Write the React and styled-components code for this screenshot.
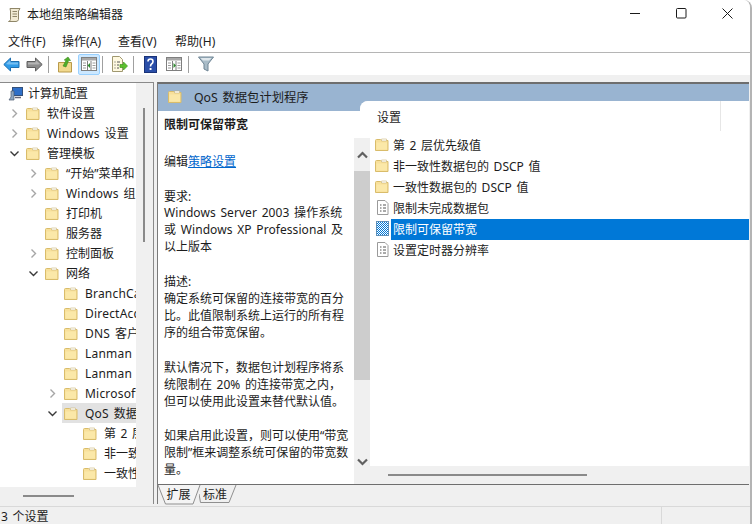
import React from "react";
import styled, { createGlobalStyle } from "styled-components";

const GlobalStyle = createGlobalStyle`
  html, body {
    margin: 0;
    padding: 0;
    background: #fff;
    overflow: hidden;
  }
  body {
    font-family: "Noto Sans", "Noto Sans CJK SC", sans-serif;
    font-size: 12px;
    word-spacing: 1.5px;
    color: #1c1c1c;
  }
`;

const Page = styled.div`
  width: 753px;
  height: 524px;
  overflow: hidden;
`;

const Window = styled.div`
  width: 750px;
  height: 524px;
  display: flex;
  flex-direction: column;
  background: #f0f0f0;
  border-right: 2px solid #b4b4b4;
  border-top-right-radius: 8px;
  overflow: hidden;
`;

const TitleBar = styled.div`
  height: 30px;
  flex: none;
  display: flex;
  align-items: center;
  padding: 0 0 0 7px;
  background: #fff;
`;

const TitleText = styled.span`
  margin-left: 6px;
  font-size: 12px;
  flex: 1;
  position: relative;
  top: -1px;
`;

const WindowButtons = styled.div`
  display: flex;
  align-items: center;
  margin-top: -4px;
`;

const WindowButton = styled.div`
  width: 46px;
  height: 26px;
  display: flex;
  align-items: center;
  justify-content: center;
`;

const MenuBar = styled.div`
  height: 22px;
  flex: none;
  display: flex;
  align-items: center;
  padding-left: 8px;
  gap: 17px;
  background: #fff;
  border-bottom: 1px solid #b5b5b5;
`;

const MenuItem = styled.span`
  font-size: 12px;
  width: ${(p) => p.$w}px;
  white-space: nowrap;
  letter-spacing: 0.05px;
`;

const ToolBar = styled.div`
  height: 22px;
  flex: none;
  display: flex;
  align-items: center;
  padding-left: 3px;
  background: #fff;
`;

const ToolButton = styled.div`
  width: ${(p) => p.$w || 16}px;
  height: 21px;
  margin-left: ${(p) => p.$ml || 0}px;
  display: flex;
  align-items: center;
  justify-content: center;
  border-radius: 2px;
  box-sizing: border-box;
  background: ${(p) => (p.$active ? "#cce8ff" : "transparent")};
  border: ${(p) => (p.$active ? "1px solid #99d1ff" : "none")};
`;

const ToolSep = styled.div`
  width: 1px;
  height: 17px;
  margin-left: ${(p) => p.$ml}px;
  background: #a0a0a0;
`;

const Main = styled.div`
  height: 423px;
  flex: none;
  margin-top: 7px;
  display: flex;
`;

const TreePane = styled.div`
  width: 153px;
  flex: none;
  height: 421px;
  box-sizing: content-box;
  display: flex;
  flex-direction: column;
  border-top: 1px solid #8a8a8a;
  border-right: 1px solid #8a8a8a;
`;

const TreeTop = styled.div`
  flex: 1;
  display: flex;
  min-height: 0;
`;

const TreeList = styled.div`
  width: 136px;
  flex: none;
  background: #fff;
  overflow: hidden;
  height: 404px;
`;

const VTrack = styled.div`
  flex: 1;
  display: flex;
  justify-content: center;
  padding: 25px 2px 0 0;
`;

const VThumb = styled.div`
  width: 2px;
  height: 134px;
  background: #8a8a8a;
`;

const HTrack = styled.div`
  height: 17px;
  flex: none;
  padding-left: 23px;
  display: flex;
  align-items: center;
`;

const HThumb = styled.div`
  width: ${(p) => p.$w}px;
  height: 2px;
  background: #8a8a8a;
`;

const TreeRow = styled.div`
  height: 20px;
  display: flex;
  align-items: center;
  white-space: nowrap;
  padding-left: ${(p) => p.$indent}px;
`;

const Twist = styled.div`
  width: 19px;
  height: 20px;
  flex: none;
  display: flex;
  align-items: center;
  justify-content: center;
  position: relative;
  left: -2px;
`;

const TreeLabel = styled.div`
  display: flex;
  align-items: center;
  flex: 1;
  height: 20px;
  margin-left: -2px;
  padding-left: 2px;
  background: ${(p) => (p.$selected ? "#e2e2e2" : "transparent")};
`;

const TreeText = styled.span`
  margin-left: ${(p) => p.$ml ?? 7}px;
  letter-spacing: ${(p) => (p.$wide ? "0.2px" : "0")};
`;

const Details = styled.div`
  margin-left: 3px;
  width: 591px;
  height: 421px;
  flex: none;
  display: flex;
  flex-direction: column;
  border-top: 1px solid #6e6e6e;
  border-left: 1px solid #7a7a7a;
`;

const Panes = styled.div`
  height: 400px;
  flex: none;
  display: flex;
  background: #99b4d1;
  border-top: 1px solid #6e6e6e;
  border-bottom: 1px solid #6e6e6e;
`;

const DescColumn = styled.div`
  width: 202px;
  flex: none;
  display: flex;
  flex-direction: column;
  position: relative;
`;

const DescHeader = styled.div`
  height: 25px;
  padding: 0 0 2px 10px;
  flex: none;
  display: flex;
  align-items: center;
  gap: 12px;
  font-size: 12.3px;
`;

const DescBody = styled.div`
  flex: 1;
  background: #fff;
  padding: 5px 0 0 6px;
  line-height: 17px;
  white-space: nowrap;
  overflow: hidden;
`;

const DescTitle = styled.div`
  font-weight: 700;
  margin-bottom: 20px;
`;

const DescLine = styled.div`
  height: ${(p) => p.$h || 17}px;
  letter-spacing: ${(p) => (p.$wide ? "0.07px" : "0")};
`;

const Gap = styled.div`
  height: ${(p) => p.$h}px;
`;

const DescLink = styled.span`
  color: #0066cc;
  text-decoration: underline;
`;

/* sits on top of both the description and the list */
const DescScroll = styled.div`
  position: absolute;
  top: 54px;
  left: 196px;
  width: 16px;
  bottom: 0;
  background: #f0f0f0;
  display: flex;
  flex-direction: column;
  align-items: center;
`;

const ArrowBox = styled.div`
  height: 33px;
  flex: none;
  width: 100%;
  display: flex;
  align-items: center;
  justify-content: center;
`;

const DescThumb = styled.div`
  width: 100%;
  height: 209px;
  flex: none;
  background: #cdcdcd;
`;

const ListColumn = styled.div`
  flex: 1;
  display: flex;
  flex-direction: column;
  margin-top: 17px;
  background: #f0f0f0;
  border-top-left-radius: 8px;
  overflow: hidden;
`;

const ListBody = styled.div`
  height: 365px;
  flex: none;
  background: #fff;
  padding-left: 15px;
`;

const ColumnHead = styled.div`
  height: 34px;
  display: flex;
  align-items: center;
  position: relative;
`;

const ColumnName = styled.span`
  margin: -3px 0 0 2px;
`;

const ColumnEdge = styled.div`
  position: absolute;
  right: 28px;
  top: 0;
  bottom: 4px;
  width: 1px;
  background: #e6e6e6;
`;

const ListRow = styled.div`
  height: 21px;
  display: flex;
  align-items: center;
  white-space: nowrap;
`;

const ListIcon = styled.div`
  display: flex;
  margin-bottom: 2px;
`;

const ListLabel = styled.div`
  flex: 1;
  height: 21px;
  box-sizing: border-box;
  display: flex;
  align-items: center;
  margin-left: 2px;
  padding: 0 0 2px 2px;
  color: ${(p) => (p.$selected ? "#fff" : "inherit")};
  background: ${(p) => (p.$selected ? "#0078d7" : "transparent")};
`;

const ListScroll = styled.div`
  flex: 1;
  display: flex;
  align-items: center;
  padding: 0 0 1px 28px;
  background: #f0f0f0;
`;

const Tabs = styled.div`
  height: 21px;
  flex: none;
  display: flex;
  background: #f0f0f0;
`;

const Tab = styled.div`
  width: ${(p) => p.$w}px;
  height: 20px;
  font-size: 12px;
  line-height: 20px;
  text-align: center;
  position: relative;
`;

const TabEdges = styled.svg`
  position: absolute;
  left: 0;
  top: 0;
`;

const TabText = styled.span`
  position: relative;
`;

const StatusBar = styled.div`
  flex: 1;
  display: flex;
  align-items: center;
  border-top: 1px solid #d9d9d9;
  margin-top: 1px;
  background: #f0f0f0;
`;

const StatusCell = styled.div`
  width: 662px;
  height: 100%;
  display: flex;
  align-items: center;
  padding-left: 1px;
  box-sizing: border-box;
  border-right: 1px solid #d9d9d9;
`;

const Folder = () => (
  <svg width="14" height="13" viewBox="0 0 14 13" style={{ flex: "none" }}>
    <path d="M.5 2.5 Q.5 1.5 1.5 1.5H5.5L6.5 2.5H13V12.5H.5Z" fill="#f8e09a" stroke="#d9bc6a" />
    <path d="M1.5 11.5V4.5H12V11.5Z" fill="#fbe8a8" />
    <path d="M6.5 1H11.5V3H6.5Z" fill="#fff" stroke="#cbb77a" strokeWidth=".6" />
  </svg>
);

const PolicyIcon = ({ selected }) =>
  selected ? (
    <svg width="14" height="15" viewBox="0 0 14 15" style={{ flex: "none" }}>
      <defs>
        <pattern id="dither" width="2" height="2" patternUnits="userSpaceOnUse">
          <rect width="2" height="2" fill="#fff" />
          <rect width="1" height="1" fill="#0078d7" />
          <rect x="1" y="1" width="1" height="1" fill="#0078d7" />
        </pattern>
      </defs>
      <rect x="1.5" y=".5" width="12" height="14" fill="url(#dither)" stroke="#5f8fb8" />
    </svg>
  ) : (
    <svg width="14" height="15" viewBox="0 0 14 15" style={{ flex: "none" }}>
      <path d="M2.5.5H10L13 3.5V14.5H2.5Z" fill="#fff" stroke="#9a9a9a" />
      <path d="M5 5h1.5M8 5h3M5 8h1.5M8 8h3M5 11h1.5M8 11h3" stroke="#555" />
    </svg>
  );

const Chevron = ({ open }) => (
  <svg width="9" height="9" viewBox="0 0 9 9">
    <path
      d={open ? "M.5 2.5L4.5 6.5L8.5 2.5" : "M2.5.5L6.5 4.5L2.5 8.5"}
      fill="none"
      stroke={open ? "#3a3a3a" : "#a6a6a6"}
      strokeWidth="1.4"
    />
  </svg>
);

const ScrollArrow = ({ up }) => (
  <svg width="11" height="8" viewBox="0 0 11 8">
    <path d={up ? "M1 6.5L5.5 2L10 6.5" : "M1 1.5L5.5 6L10 1.5"} fill="none" stroke="#606060" strokeWidth="2.2" />
  </svg>
);

const ScrollIcon = () => (
  <svg width="14" height="16" viewBox="0 0 14 16">
    <path d="M3 1.5H13L11.5 4V12.5Q11 14.5 9 14.5H1.5Q3.5 14 3.5 12.5V4Z" fill="#f1ead2" stroke="#8f8668" />
    <path d="M5.5 4.5H10M5.5 7H10M5.5 9.5H10" stroke="#8f8668" />
  </svg>
);

const ArrowIcon = ({ color, edge, flip }) => (
  <svg width="17" height="15" viewBox="0 0 17 15" style={{ transform: flip ? "scaleX(-1)" : "none" }}>
    <path d="M.8 7.5L7.5 1V4.5H16V10.5H7.5V14Z" fill={color} stroke={edge} />
    <path d="M3 7L7.5 3V5.5H15V7.5H5Z" fill="#fff" opacity=".35" />
  </svg>
);

const UpFolderIcon = () => (
  <svg width="15" height="17" viewBox="0 0 15 17">
    <path d="M.5 6.5H13.5V16H.5Z" fill="#f2d98e" stroke="#b99a4a" />
    <path d="M5 10L8 4.5L6.2 4L10 1L12.5 4.5L10.6 4.6L8 11Z" fill="#4fae2c" stroke="#3c8a1e" strokeWidth=".6" />
  </svg>
);

const PanelIcon = ({ side }) => (
  <svg width="16" height="14" viewBox="0 0 16 14">
    <rect x=".5" y=".5" width="15" height="13" fill="#fff" stroke="#7f7f7f" />
    <rect x="1" y="1" width="14" height="2.5" fill="#a8a8a8" />
    <path d="M6.5 4V13" stroke="#7f7f7f" />
    <path d="M10 4V13" stroke="#7f7f7f" />
    <path d={side === "left" ? "M9 6V11L6.5 8.5Z" : "M7.5 6V11L10 8.5Z"} fill="#2e8b2e" />
    <path d="M2 6h3M2 8.5h3M2 11h3M11.5 6h3M11.5 8.5h3M11.5 11h3" stroke="#9a9a9a" />
  </svg>
);

const ExportIcon = () => (
  <svg width="17" height="17" viewBox="0 0 17 17">
    <path d="M1.5.5H8.5L11.5 3.5V15.5H1.5Z" fill="#fff9e0" stroke="#a09870" />
    <path d="M3.5 6H4.5M6 6H9M3.5 9H4.5M6 9H8M3.5 12H4.5M6 12H8" stroke="#555" />
    <path d="M9 8.5H12.5V6L16.5 10L12.5 14V11.5H9Z" fill="#5cc02c" stroke="#3e9a1c" strokeWidth=".7" />
  </svg>
);

const HelpIcon = () => (
  <svg width="13" height="17" viewBox="0 0 13 17">
    <rect width="13" height="17" fill="#2a4ea8" />
    <rect x=".5" y=".5" width="12" height="16" fill="none" stroke="#1a3378" />
    <path d="M4 5.5Q4 3 6.5 3T9 5.5Q9 7 7.5 8Q6.5 8.7 6.5 10.5" fill="none" stroke="#fff" strokeWidth="1.6" />
    <rect x="5.6" y="12" width="1.9" height="2" fill="#fff" />
  </svg>
);

const FilterIcon = () => (
  <svg width="16" height="16" viewBox="0 0 16 16">
    <path d="M.5 1H15.5L10 8V15L6 13V8Z" fill="#a9bcc8" stroke="#6e8494" />
    <path d="M2.5 2H13.5L11 4.5H5Z" fill="#dfe7ec" />
  </svg>
);

const treeItems = [
  { depth: 0, twist: "closed", text: "软件设置" },
  { depth: 0, twist: "closed", text: "Windows 设置" },
  { depth: 0, twist: "open", text: "管理模板" },
  { depth: 1, twist: "closed", text: "“开始”菜单和" },
  { depth: 1, twist: "closed", text: "Windows 组" },
  { depth: 1, text: "打印机" },
  { depth: 1, text: "服务器" },
  { depth: 1, twist: "closed", text: "控制面板" },
  { depth: 1, twist: "open", text: "网络" },
  { depth: 2, text: "BranchCa" },
  { depth: 2, text: "DirectAcc" },
  { depth: 2, text: "DNS 客户" },
  { depth: 2, text: "Lanman 工" },
  { depth: 2, text: "Lanman 工" },
  { depth: 2, twist: "closed", text: "Microsoft" },
  { depth: 2, twist: "open", text: "QoS 数据", selected: true },
  { depth: 3, text: "第 2 层" },
  { depth: 3, text: "非一致" },
  { depth: 3, text: "一致性" },
];

const listItems = [
  { kind: "folder", text: "第 2 层优先级值" },
  { kind: "folder", text: "非一致性数据包的 DSCP 值" },
  { kind: "folder", text: "一致性数据包的 DSCP 值" },
  { kind: "policy", text: "限制未完成数据包" },
  { kind: "policy", text: "限制可保留带宽", selected: true },
  { kind: "policy", text: "设置定时器分辨率" },
];

export default function App() {
  return (
    <Page>
      <GlobalStyle />
      <Window>
        <TitleBar>
          <ScrollIcon />
          <TitleText>本地组策略编辑器</TitleText>
          <WindowButtons>
            <WindowButton>
              <svg width="11" height="11" viewBox="0 0 11 11">
                <path d="M0 5.5H10" stroke="#1a1a1a" />
              </svg>
            </WindowButton>
            <WindowButton>
              <svg width="11" height="11" viewBox="0 0 11 11">
                <rect x=".5" y=".5" width="9.5" height="9.5" rx="1" fill="none" stroke="#1a1a1a" />
              </svg>
            </WindowButton>
            <WindowButton>
              <svg width="11" height="11" viewBox="0 0 11 11">
                <path d="M.5.5L10.5 10.5M10.5.5L.5 10.5" stroke="#1a1a1a" />
              </svg>
            </WindowButton>
          </WindowButtons>
        </TitleBar>
        <MenuBar>
          <MenuItem $w={37}>文件(F)</MenuItem>
          <MenuItem $w={39}>操作(A)</MenuItem>
          <MenuItem $w={40}>查看(V)</MenuItem>
          <MenuItem $w={40}>帮助(H)</MenuItem>
        </MenuBar>
        <ToolBar>
          <ToolButton $w={17}>
            <ArrowIcon color="#2f9be8" edge="#1d6fb0" />
          </ToolButton>
          <ToolButton $w={17} $ml={6}>
            <ArrowIcon color="#8c8c8c" edge="#5e5e5e" flip />
          </ToolButton>
          <ToolSep $ml={5} />
          <ToolButton $w={15} $ml={9}>
            <UpFolderIcon />
          </ToolButton>
          <ToolButton $w={22} $ml={5} $active>
            <PanelIcon side="left" />
          </ToolButton>
          <ToolSep $ml={2} />
          <ToolButton $w={17} $ml={8}>
            <ExportIcon />
          </ToolButton>
          <ToolSep $ml={5} />
          <ToolButton $w={13} $ml={10}>
            <HelpIcon />
          </ToolButton>
          <ToolButton $w={16} $ml={9}>
            <PanelIcon side="right" />
          </ToolButton>
          <ToolSep $ml={6} />
          <ToolButton $w={16} $ml={9}>
            <FilterIcon />
          </ToolButton>
        </ToolBar>
        <Main>
          <TreePane>
            <TreeTop>
              <TreeList>
                <TreeRow $indent={8}>
                  <svg width="15" height="15" viewBox="0 0 15 15" style={{ flex: "none" }}>
                    <rect x="4.5" y="1.5" width="10" height="8" fill="#2f6fc8" stroke="#34507a" />
                    <path d="M3 5H6V14H1L3 11Z" fill="#8fa6c0" stroke="#4a5a70" strokeWidth=".7" />
                    <path d="M7 11.5H13" stroke="#667" strokeWidth="1.5" />
                  </svg>
                  <TreeText $ml={5}>计算机配置</TreeText>
                </TreeRow>
                {treeItems.map((item, i) => (
                  <TreeRow key={i} $indent={7 + item.depth * 19}>
                    <Twist>{item.twist && <Chevron open={item.twist === "open"} />}</Twist>
                    <TreeLabel $selected={item.selected}>
                      <Folder />
                      <TreeText $wide={/[A-Za-z]/.test(item.text)}>{item.text}</TreeText>
                    </TreeLabel>
                  </TreeRow>
                ))}
              </TreeList>
              <VTrack>
                <VThumb />
              </VTrack>
            </TreeTop>
            <HTrack>
              <HThumb $w={51} />
            </HTrack>
          </TreePane>
          <Details>
            <Panes>
              <DescColumn>
                <DescHeader>
                  <Folder />
                  <span>QoS 数据包计划程序</span>
                </DescHeader>
                <DescBody>
                  <DescTitle>限制可保留带宽</DescTitle>
                  <DescLine>
                    编辑<DescLink>策略设置</DescLink>
                  </DescLine>
                  <Gap $h={18} />
                  <DescLine $h={16}>要求:</DescLine>
                  <DescLine $wide>Windows Server 2003 操作系统</DescLine>
                  <DescLine $wide>或 Windows XP Professional 及</DescLine>
                  <DescLine>以上版本</DescLine>
                  <Gap $h={18} />
                  <DescLine>描述:</DescLine>
                  <DescLine>确定系统可保留的连接带宽的百分</DescLine>
                  <DescLine>比。此值限制系统上运行的所有程</DescLine>
                  <DescLine>序的组合带宽保留。</DescLine>
                  <Gap $h={18} />
                  <DescLine>默认情况下，数据包计划程序将系</DescLine>
                  <DescLine>统限制在 20% 的连接带宽之内，</DescLine>
                  <DescLine>但可以使用此设置来替代默认值。</DescLine>
                  <Gap $h={17} />
                  <DescLine>如果启用此设置，则可以使用“带宽</DescLine>
                  <DescLine>限制”框来调整系统可保留的带宽数</DescLine>
                  <DescLine>量。</DescLine>
                </DescBody>
                <DescScroll>
                  <ArrowBox>
                    <ScrollArrow up />
                  </ArrowBox>
                  <DescThumb />
                  <Gap $h={65} />
                  <ArrowBox>
                    <ScrollArrow />
                  </ArrowBox>
                </DescScroll>
              </DescColumn>
              <ListColumn>
                <ListBody>
                  <ColumnHead>
                    <ColumnName>设置</ColumnName>
                    <ColumnEdge />
                  </ColumnHead>
                  {listItems.map((item) => (
                    <ListRow key={item.text}>
                      <ListIcon>
                        {item.kind === "folder" ? <Folder /> : <PolicyIcon selected={item.selected} />}
                      </ListIcon>
                      <ListLabel $selected={item.selected}>{item.text}</ListLabel>
                    </ListRow>
                  ))}
                </ListBody>
                <ListScroll>
                  <HThumb $w={199} />
                </ListScroll>
              </ListColumn>
            </Panes>
            <Tabs>
              <Tab $w={41}>
                <TabEdges width="44" height="20" viewBox="0 0 44 20">
                  <path d="M0 0L7.5 19H35L42 0" fill="#f4f4f4" stroke="#8f8f8f" />
                </TabEdges>
                <TabText>扩展</TabText>
              </Tab>
              <Tab $w={32}>
                <TabEdges width="39" height="20" viewBox="0 0 39 20">
                  <path d="M0 9L1.5 17.5H30L37 0" fill="none" stroke="#8f8f8f" />
                </TabEdges>
                <TabText>标准</TabText>
              </Tab>
            </Tabs>
          </Details>
        </Main>
        <StatusBar>
          <StatusCell>3 个设置</StatusCell>
        </StatusBar>
      </Window>
    </Page>
  );
}
